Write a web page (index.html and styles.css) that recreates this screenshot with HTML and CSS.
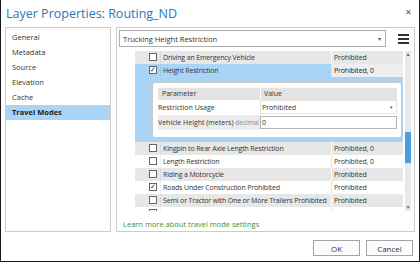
FILE: index.html
```
<!DOCTYPE html>
<html lang="en">

<head>
    <meta charset="UTF-8">
    <title>Layer Properties: Routing_ND</title>
    <link rel="stylesheet" href="styles.css">
</head>

<body>
    <div class="dialog">
        <div class="titlebar">
            <span class="title">Layer Properties: Routing_ND</span>
            <span class="close">&#x2715;</span>
        </div>
        <div class="content">
            <ul class="nav">
                <li>General</li>
                <li>Metadata</li>
                <li>Source</li>
                <li>Elevation</li>
                <li>Cache</li>
                <li class="active">Travel Modes</li>
            </ul>
            <div class="main">
                <div class="toolbar">
                    <div class="combo">
                        <span>Trucking Height Restriction</span>
                        <span class="caret">&#9662;</span>
                    </div>
                    <div class="menuBtn"><i></i><i></i><i></i></div>
                </div>
                <div class="gridWrap">
                    <div class="grid">
                        <div class="row shade">
                            <span class="cell check"><b class="box"></b></span>
                            <span class="cell name">Driving an Emergency Vehicle</span>
                            <span class="cell value">Prohibited</span>
                        </div>
                        <div class="row selected">
                            <span class="cell check"><b class="box on">&#10003;</b></span>
                            <span class="cell name">Height Restriction</span>
                            <span class="cell value">Prohibited, 0</span>
                        </div>
                        <div class="expand">
                            <div class="params">
                                <div class="prow phead">
                                    <span class="plabel">Parameter</span>
                                    <span class="pvalue">Value</span>
                                </div>
                                <div class="prow">
                                    <span class="plabel">Restriction Usage</span>
                                    <span class="pvalue"><span class="pselect">Prohibited<em>&#9662;</em></span></span>
                                </div>
                                <div class="prow">
                                    <span class="plabel grey">Vehicle Height (meters) <small>decimal</small></span>
                                    <span class="pvalue"><span class="pinput">0</span></span>
                                </div>
                            </div>
                        </div>
                        <div class="row shade">
                            <span class="cell check"><b class="box"></b></span>
                            <span class="cell name">Kingpin to Rear Axle Length Restriction</span>
                            <span class="cell value">Prohibited, 0</span>
                        </div>
                        <div class="row">
                            <span class="cell check"><b class="box"></b></span>
                            <span class="cell name">Length Restriction</span>
                            <span class="cell value">Prohibited, 0</span>
                        </div>
                        <div class="row shade">
                            <span class="cell check"><b class="box"></b></span>
                            <span class="cell name">Riding a Motorcycle</span>
                            <span class="cell value">Prohibited</span>
                        </div>
                        <div class="row">
                            <span class="cell check"><b class="box on">&#10003;</b></span>
                            <span class="cell name">Roads Under Construction Prohibited</span>
                            <span class="cell value">Prohibited</span>
                        </div>
                        <div class="row shade">
                            <span class="cell check"><b class="box"></b></span>
                            <span class="cell name">Semi or Tractor with One or More Trailers Prohibited</span>
                            <span class="cell value">Prohibited</span>
                        </div>
                        <div class="row">
                            <span class="cell check"><b class="box"></b></span>
                            <span class="cell name"></span>
                            <span class="cell value"></span>
                        </div>
                    </div>
                    <div class="scrollbar">
                        <span class="arrow">&#9650;</span>
                        <div class="track"><div class="thumb"></div></div>
                        <span class="arrow">&#9660;</span>
                    </div>
                </div>
                <a class="learnMore">Learn more about travel mode settings</a>
            </div>
        </div>
        <div class="footer">
            <button class="btn">OK</button>
            <button class="btn">Cancel</button>
        </div>
    </div>
</body>

</html>
```

FILE: styles.css
```
/* Layer properties dialog, travel modes page */

body {
    margin: 0;
    font-family: "Open Sans", "Noto Sans", sans-serif;
    font-size: 7px;
    color: #333;
}

.dialog {
    width: 420px;
    height: 262px;
    box-sizing: border-box;
    border: 1px solid #1a1a1a;
    border-top: none;
    background: #fff;
    display: flex;
    flex-direction: column;
}

.titlebar {
    height: 27px;
    display: flex;
    align-items: center;
    justify-content: space-between;
    padding: 0 7px 0 5px;
    box-sizing: border-box;
}

.title {
    font-size: 12.5px;
    color: #2a78b8;
    margin-top: -1px;
}

.close {
    font-size: 8px;
    color: #555;
    margin-top: -4px;
}

.content {
    display: flex;
    gap: 5px;
    padding: 0 4px;
    height: 205px;
}

.nav {
    list-style: none;
    margin: 0;
    padding: 2px 0 0 0;
    width: 106px;
    box-sizing: border-box;
    border: 1px solid #cdcdcd;
}

.nav li {
    height: 15px;
    line-height: 15px;
    padding-left: 6px;
    font-size: 7.5px;
}

.nav li.active {
    background: #a9d4f5;
    font-weight: bold;
    color: #222;
}

.main {
    flex: 1;
    border: 1px solid #cdcdcd;
    padding: 2px 0 0 2px;
    display: flex;
    flex-direction: column;
}

.toolbar {
    display: flex;
    align-items: center;
}

.combo {
    width: 267px;
    height: 17px;
    box-sizing: border-box;
    border: 1px solid #adadad;
    display: flex;
    align-items: center;
    justify-content: space-between;
    padding: 0 4px 0 3px;
    font-size: 7.5px;
}

.combo .caret {
    font-size: 6px;
    color: #555;
}

.menuBtn {
    margin-left: 12px;
    width: 11px;
    display: flex;
    flex-direction: column;
    gap: 2px;
}

.menuBtn i {
    display: block;
    height: 2px;
    background: #333;
}

.gridWrap {
    margin: 4px 0 0 16px;
    height: 160px;
    display: flex;
    gap: 2px;
    overflow: hidden;
}

.grid {
    width: 268px;
}

.row {
    display: grid;
    grid-template-columns: 25px 171px 72px;
    height: 13px;
    line-height: 13px;
    background: #fff;
}

.row.shade {
    background: #e7e7e7;
}

.row.selected {
    background: #a9d4f5;
}

.row.selected .value {
    background: #eeeeee;
    color: #222;
}

.cell {
    white-space: nowrap;
    overflow: hidden;
    letter-spacing: -0.15px;
}

.cell.name {
    padding-left: 2px;
    border-left: 1px solid rgba(0, 0, 0, 0.06);
}

.cell.value {
    padding-left: 2px;
    border-left: 1px solid #fff;
}

.row:not(.shade) .cell.value {
    border-left-color: #e2e2e2;
}

.check {
    padding-left: 14px;
    padding-top: 2px;
    box-sizing: border-box;
}

.box {
    display: block;
    width: 8px;
    height: 8px;
    box-sizing: border-box;
    border: 1px solid #666;
    background: #fff;
    font-size: 7px;
    line-height: 6px;
    text-align: center;
    font-weight: normal;
    color: #222;
}

.expand {
    height: 65px;
    background: #a9d4f5;
    padding: 5px 1px 0 17px;
    box-sizing: border-box;
}

.params {
    height: 56px;
    background: #fff;
    border: 1px solid #c9c9c9;
    border-radius: 3px;
    box-sizing: border-box;
    padding: 5px 4px 0 5px;
}

.prow {
    display: grid;
    grid-template-columns: 102px 137px;
    height: 15px;
    line-height: 15px;
}

.prow.phead {
    height: 12px;
    line-height: 12px;
    background: #e3e3e3;
}

.phead .plabel {
    padding-left: 4px;
}

.phead .pvalue {
    padding-left: 3px;
    border-left: 1px solid #fff;
}

.plabel {
    white-space: nowrap;
    overflow: hidden;
}

.plabel.grey {
    background: #ececec;
}

.plabel small {
    font-size: 6.5px;
    color: #888;
}

.pselect,
.pinput {
    display: flex;
    justify-content: space-between;
    align-items: center;
    height: 14px;
    box-sizing: border-box;
    border: 1px solid #e6e6e6;
    padding: 0 3px 0 1px;
}

.pinput {
    border-color: #b4b4b4;
    margin-top: 1px;
    height: 13px;
}

.pselect em {
    font-style: normal;
    font-size: 5px;
    color: #555;
}

.scrollbar {
    width: 6px;
    background: #e8e8e8;
    display: flex;
    flex-direction: column;
    align-items: center;
}

.arrow {
    font-size: 5px;
    line-height: 7px;
    color: #666;
}

.track {
    flex: 1;
    width: 6px;
    position: relative;
}

.thumb {
    position: absolute;
    top: 74px;
    left: 0;
    width: 6px;
    height: 31px;
    background: #4b9fe1;
}

.learnMore {
    margin: 8px 0 0 4px;
    color: #3a913a;
    font-size: 7.5px;
}

.footer {
    flex: 1;
    display: flex;
    justify-content: flex-end;
    align-items: flex-start;
    gap: 6px;
    padding: 8px 6px 0 0;
}

.btn {
    width: 47px;
    height: 16px;
    font-family: inherit;
    font-size: 8px;
    color: #333;
    background: #fcfcfc;
    border: 1px solid #a5a5a5;
    padding: 0;
}
```
